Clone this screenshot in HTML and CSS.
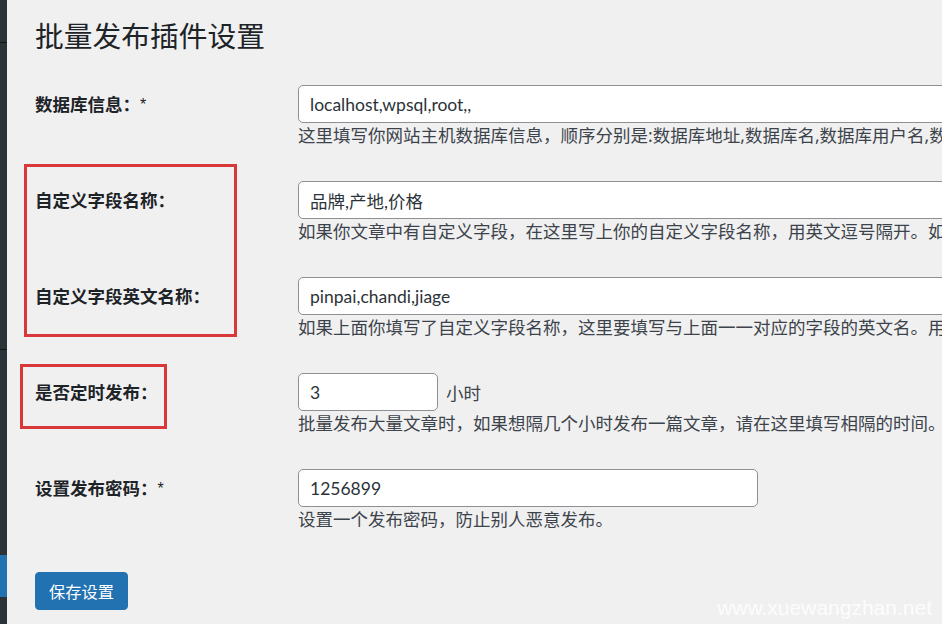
FILE: index.html
```html
<!DOCTYPE html>
<html lang="zh-CN">
<head>
  <meta charset="UTF-8" />
  <title>批量发布插件设置</title>
  <link rel="stylesheet" href="styles.css">
</head>
<body>
  <div class="page">
    <div class="admin-menu">
      <div class="menu-top"></div>
      <div class="menu-mid"></div>
      <div class="menu-low"></div>
      <div class="menu-current"></div>
      <div class="menu-end"></div>
    </div>

    <div class="wrap">
      <h1>批量发布插件设置</h1>

      <form class="form-table">
        <div class="row">
          <div class="label">数据库信息：<span class="required">*</span></div>
          <div class="field">
            <input class="regular-text wide" type="text" value="localhost,wpsql,root,," />
            <p class="description">这里填写你网站主机数据库信息，顺序分别是:数据库地址,数据库名,数据库用户名,数据库密码。</p>
          </div>
        </div>

        <div class="row">
          <div class="label">自定义字段名称：</div>
          <div class="field">
            <input class="regular-text wide" type="text" value="品牌,产地,价格" />
            <p class="description">如果你文章中有自定义字段，在这里写上你的自定义字段名称，用英文逗号隔开。如果没有请留空。</p>
          </div>
        </div>

        <div class="row">
          <div class="label">自定义字段英文名称：</div>
          <div class="field">
            <input class="regular-text wide" type="text" value="pinpai,chandi,jiage" />
            <p class="description">如果上面你填写了自定义字段名称，这里要填写与上面一一对应的字段的英文名。用英文逗号隔开。</p>
          </div>
        </div>

        <div class="row">
          <div class="label">是否定时发布：</div>
          <div class="field">
            <div class="inline">
              <input class="regular-text small" type="text" value="3" />
              <span class="unit">小时</span>
            </div>
            <p class="description">批量发布大量文章时，如果想隔几个小时发布一篇文章，请在这里填写相隔的时间。</p>
          </div>
        </div>

        <div class="row">
          <div class="label">设置发布密码：<span class="required">*</span></div>
          <div class="field">
            <input class="regular-text medium" type="text" value="1256899" />
            <p class="description">设置一个发布密码，防止别人恶意发布。</p>
          </div>
        </div>

        <p class="submit">
          <button type="button" class="button-primary">保存设置</button>
        </p>
      </form>
    </div>

    <!-- annotation boxes from the screenshot -->
    <div class="mark mark-fields"></div>
    <div class="mark mark-timer"></div>

    <div class="watermark">www.xuewangzhan.net</div>
  </div>
</body>
</html>
```

FILE: styles.css
```css
html, body {
  margin: 0;
  height: 100%;
  overflow: hidden;
}
body {
  background: #f0f0f1;
  color: #1d2327;
  font-family: "Noto Sans", "Noto Sans CJK SC", sans-serif;
}
.page {
  position: relative;
  display: flex;
  height: 624px;
  overflow: hidden;
}
.admin-menu {
  width: 7px;
  flex: none;
  display: flex;
  flex-direction: column;
  background: #2c3338;
}
.menu-top {
  height: 42px;
  border-bottom: 1px solid #101517;
}
.menu-mid {
  height: 306px;
  border-bottom: 1px solid #101517;
}
.menu-low {
  height: 205px;
}
.menu-current {
  height: 42px;
  background: #2271b1;
}
.menu-end {
  flex: 1;
}
.wrap {
  flex: 1;
  padding-left: 28px;
  min-width: 0;
}
h1 {
  font-size: 28.75px;
  font-weight: 400;
  line-height: 38px;
  margin: 17px 0 11px;
  color: #1d2327;
}
.row {
  display: flex;
  height: 96px;
  padding-top: 19px;
  box-sizing: border-box;
}
.label {
  width: 263px;
  flex: none;
  font-size: 17.5px;
  font-weight: bold;
  line-height: 38px;
  color: #1d2327;
}
.required {
  font-weight: normal;
  font-family: "Liberation Sans", sans-serif;
  font-size: 16px;
  vertical-align: 1px;
}
.field {
  flex: 1;
  min-width: 0;
  overflow: hidden;
}
.regular-text {
  box-sizing: border-box;
  height: 38px;
  padding: 0 11px;
  border: 1px solid #8c8f94;
  border-radius: 5px;
  background: #fff;
  color: #2c3338;
  font-family: Lato, "Noto Sans CJK SC", sans-serif;
  font-size: 17.5px;
  display: block;
}
.wide {
  width: 760px;
}
.small {
  width: 140px;
}
.medium {
  width: 460px;
}
.inline {
  display: flex;
  align-items: center;
}
.unit {
  margin-left: 8px;
  font-size: 17.5px;
  color: #3c434a;
}
.description {
  margin: 0;
  font-size: 17.5px;
  line-height: 24px;
  color: #3c434a;
  white-space: nowrap;
}
.submit {
  margin: 26px 0 0;
}
.button-primary {
  height: 38px;
  padding: 0 13px;
  background: #2271b1;
  border: 1px solid #2271b1;
  border-radius: 4px;
  color: #fff;
  font-family: "Noto Sans", "Noto Sans CJK SC", sans-serif;
  font-size: 16.25px;
}
.mark {
  position: absolute;
  border: 3px solid #d9383a;
}
.mark-fields {
  left: 24px;
  top: 164px;
  width: 207px;
  height: 167px;
}
.mark-timer {
  left: 20px;
  top: 364px;
  width: 141px;
  height: 59px;
}
.watermark {
  position: absolute;
  right: 10px;
  bottom: 4px;
  font-family: "Liberation Sans", Arial, sans-serif;
  font-size: 21px;
  color: rgba(255, 255, 255, 0.85);
}
```
